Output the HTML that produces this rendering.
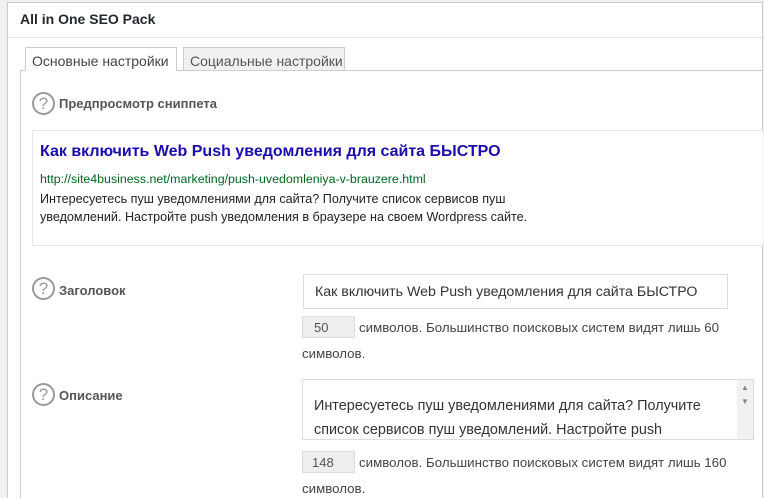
<!DOCTYPE html><html><head><meta charset="utf-8"><style>
*{box-sizing:border-box;margin:0;padding:0}
html,body{width:764px;height:498px;overflow:hidden}
body{background:#f1f1f1;font-family:"Liberation Sans","DejaVu Sans",sans-serif;position:relative;color:#444}
.a{position:absolute}
.panel{left:7px;top:2px;width:756px;height:520px;background:#fff;border:1px solid #ccc}
.help{width:23px;height:23px;border:2px solid #999;border-radius:50%;color:#999;font-size:17px;line-height:19px;text-align:center}
.lbl{font-size:13px;color:#555;font-weight:bold}
.t{font-size:13.3px;color:#444}
</style></head><body>
<div class="a panel"></div>
<div class="a" style="left:8px;top:37px;width:754px;height:1px;background:#e5e5e5"></div>
<div class="a" style="left:20px;top:11px;font-size:14px;color:#23282d;font-weight:bold">All in One SEO Pack</div>
<div class="a" style="left:20px;top:70px;width:743px;height:440px;border:1px solid #ccc;border-right:none"></div>
<div class="a" style="left:25px;top:47px;width:152px;height:24px;background:#fff;border:1px solid #ccc;border-bottom:none;font-size:14px;color:#444;padding:5px 0 0 6px">Основные настройки</div>
<div class="a" style="left:183px;top:47px;width:162px;height:23px;background:#f1f1f1;border:1px solid #ccc;border-bottom:none;font-size:14px;color:#555;padding:5px 0 0 6px">Социальные настройки</div>
<div class="a help" style="left:32px;top:92px">?</div>
<div class="a lbl" style="left:59px;top:96px">Предпросмотр сниппета</div>
<div class="a" style="left:32px;top:130px;width:731px;height:116px;background:#fff;border:1px solid #e5e5e5;border-right:none"></div>
<div class="a" style="left:40px;top:143px;font-size:16px;font-weight:bold;color:#1a0dab">Как включить Web Push уведомления для сайта БЫСТРО</div>
<div class="a" style="left:40px;top:172px;font-size:12.4px;color:#006621">http://site4business.net/marketing/push-uvedomleniya-v-brauzere.html</div>
<div class="a" style="left:40px;top:190px;font-size:12.6px;color:#222;line-height:18px;width:520px">Интересуетесь пуш уведомлениями для сайта? Получите список сервисов пуш<br>уведомлений. Настройте push уведомления в браузере на своем Wordpress сайте.</div>
<div class="a help" style="left:32px;top:277px">?</div>
<div class="a lbl" style="left:59px;top:283px">Заголовок</div>
<div class="a" style="left:303px;top:274px;width:425px;height:35px;border:1px solid #ddd;padding:9px 0 0 11px;font-size:14.2px;color:#333">Как включить Web Push уведомления для сайта БЫСТРО</div>
<div class="a" style="left:302px;top:316px;width:53px;height:22px;background:#eee;border:1px solid #ddd;font-size:13px;padding:3px 0 0 11px;color:#555">50</div>
<div class="a t" style="left:359px;top:320px">символов. Большинство поисковых систем видят лишь 60</div>
<div class="a t" style="left:302px;top:346px">символов.</div>
<div class="a help" style="left:32px;top:383px">?</div>
<div class="a lbl" style="left:59px;top:388px">Описание</div>
<div class="a" style="left:302px;top:379px;width:452px;height:61px;border:1px solid #ddd;padding:14px 0 0 11px;font-size:14.4px;color:#333;line-height:24px;overflow:hidden">Интересуетесь пуш уведомлениями для сайта? Получите<br>список сервисов пуш уведомлений. Настройте push</div>
<div class="a" style="left:737px;top:380px;width:16px;height:59px;background:#f1f1f1;font-size:8px;color:#888;text-align:center;line-height:14px;padding-top:1px">▲<br>▼</div>
<div class="a" style="left:302px;top:451px;width:53px;height:22px;background:#eee;border:1px solid #ddd;font-size:13px;padding:3px 0 0 9px;color:#555">148</div>
<div class="a t" style="left:359px;top:455px">символов. Большинство поисковых систем видят лишь 160</div>
<div class="a t" style="left:302px;top:481px">символов.</div>
</body></html>
